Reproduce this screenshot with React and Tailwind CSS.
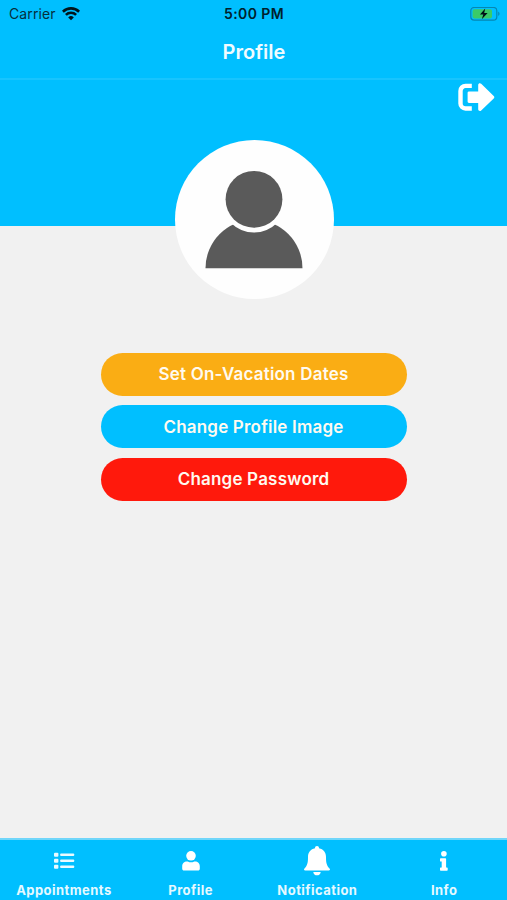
import React from "react";

function StatusBar() {
  return (
    <div className="grid h-7 grid-cols-3 items-center pl-[9px] pr-[7px] text-[14px] leading-7 text-[#06303d]">
      <div className="flex items-center gap-[6px]">
        <span className="tracking-[0.1px]">Carrier</span>
        <svg className="h-[14px] w-[18px]" viewBox="0 0 18 14" fill="none" stroke="#00151c" strokeWidth="2.6">
          <path d="M0.9 4.7a11.6 11.6 0 0 1 16.2 0" />
          <path d="M3.9 7.9a7.3 7.3 0 0 1 10.2 0" />
          <path d="M9 13.2L6.2 10.4a4 4 0 0 1 5.6 0z" fill="#00151c" stroke="none" />
        </svg>
      </div>
      <div className="pr-px text-center font-semibold tracking-[0.4px] text-[#00212c]">5:00 PM</div>
      <svg className="h-[15px] w-[30px] justify-self-end" viewBox="0 0 30 15">
        <rect x="0.8" y="0.4" width="26" height="12.8" rx="3.4" fill="none" stroke="#0587b2" strokeWidth="1.2" />
        <rect x="2.6" y="2.2" width="19.4" height="9.2" rx="1.8" fill="#3bcb68" />
        <path d="M28.2 4.6v4.4c1.8-.7 1.8-3.7 0-4.4z" fill="#0587b2" />
        <path d="M15.2 1.6L10 7.6h3.3l-1.5 4.7L17.6 6.1h-3.4z" fill="#001016" />
      </svg>
    </div>
  );
}

function Avatar() {
  return (
    <div className="h-[159px] w-[159px] rounded-full bg-[#fefefe]">
      <svg className="h-full w-full" viewBox="0 0 159 159">
        <path d="M30.5 128.2a48.5 48.5 0 0 1 97 0z" fill="#5a5a5a" />
        <circle cx="79" cy="59.5" r="33" fill="#fefefe" />
        <circle cx="79" cy="59.3" r="28.4" fill="#5a5a5a" />
      </svg>
    </div>
  );
}

function LogoutIcon() {
  return (
    <svg className="h-7 w-[37px]" viewBox="0 0 37 28" fill="#fff">
      <path d="M13.8 2.9H7.5a5 5 0 0 0-5 5v12.6a5 5 0 0 0 5 5h6.3" fill="none" stroke="#fff" strokeWidth="4.4" />
      <path d="M9.6 9.8c0-.8.6-1.4 1.4-1.4h9.2V2c0-1.7 1.9-2.3 3-1.200l12.500 12.100c.8.8.8 1.700 0 2.500L23.200 27.400c-1.100 1.100-3 .4-3-1.200v-6.300H11c-.8 0-1.400-.6-1.400-1.400z" />
    </svg>
  );
}

function ListIcon() {
  return (
    <svg className="h-[18px] w-[22px]" viewBox="0 0 22 18" fill="#e9faff">
      <rect x="1" y="0.7" width="4.4" height="4" rx="1" />
      <rect x="1" y="6.7" width="4.4" height="4" rx="1" />
      <rect x="1" y="12.7" width="4.4" height="4" rx="1" />
      <rect x="7.2" y="1.5" width="14" height="2.5" rx="0.8" />
      <rect x="7.2" y="7.5" width="14" height="2.5" rx="0.8" />
      <rect x="7.2" y="13.5" width="14" height="2.5" rx="0.8" />
    </svg>
  );
}

function PersonIcon() {
  return (
    <svg className="h-5 w-[18px]" viewBox="0 0 18 20" fill="#fff">
      <circle cx="9" cy="4.8" r="4.8" />
      <path d="M4.9 10.5h.9a6.9 6.9 0 0 0 6.4 0h.9c2.6 0 4.7 2.1 4.7 4.7v2.6c0 1-.8 1.8-1.8 1.8H2c-1 0-1.8-.8-1.8-1.8v-2.6c0-2.6 2.1-4.7 4.7-4.7z" />
    </svg>
  );
}

function BellIcon() {
  return (
    <svg className="h-[30px] w-[26px]" viewBox="0 0 26 30" fill="#fff">
      <path d="M13 0c-1.3 0-2 .9-2 2.3-4.4.9-7 4.3-7 8.7 0 6.5-.9 8.700-3.500 11.400-1 1-.4 2.100.7 2.100h23.600c1.100 0 1.700-1.100.7-2.100C22.900 19.700 22 17.500 22 11c0-4.400-2.600-7.800-7-8.700C15 .9 14.300 0 13 0z" />
      <path d="M9.300 25.900h7.400c-.2 2.100-1.700 3.400-3.700 3.400s-3.500-1.300-3.700-3.400z" />
    </svg>
  );
}

function InfoIcon() {
  return (
    <svg className="h-5 w-2" viewBox="0 0 8 20" fill="#fff">
      <circle cx="3.9" cy="2.8" r="2.8" />
      <path d="M.7 7.2h4.700c.4 0 .7.300.7.700v8.500h.9c.4 0 .7.300.7.700v2c0 .4-.3.700-.7.700H.7c-.4 0-.7-.3-.7-.7v-2c0-.4.3-.7.7-.7h1v-5.800h-1c-.4 0-.7-.3-.7-.7v-2c0-.4.3-.7.7-.7z" />
    </svg>
  );
}

const actions = [
  { label: "Set On-Vacation Dates", color: "bg-[#faad14]" },
  { label: "Change Profile Image", color: "bg-[#00bfff]" },
  { label: "Change Password", color: "bg-[#ff190c]" },
];

const tabs = [
  { label: "Appointments", Icon: ListIcon },
  { label: "Profile", Icon: PersonIcon },
  { label: "Notification", Icon: BellIcon },
  { label: "Info", Icon: InfoIcon },
];

export default function App() {
  return (
    <div className="flex h-[900px] w-[507px] flex-col overflow-hidden bg-[#f1f1f1] font-['Inter','Liberation_Sans',sans-serif]">
      <header className="h-20 shrink-0 border-b-2 border-[#18c4fe] bg-[#00bfff]">
        <StatusBar />
        <h1 className="pt-[9px] pl-px text-center text-[20px] leading-[30px] font-semibold text-[#f0fbff]">Profile</h1>
      </header>
      <main className="flex flex-1 flex-col items-center">
        <div className="flex h-[146px] w-full shrink-0 items-start justify-end bg-[#00bfff] pt-[3px] pr-[12px]">
          <button aria-label="Log out">
            <LogoutIcon />
          </button>
        </div>
        <div className="-mt-[86px] pl-px">
          <Avatar />
        </div>
        <div className="mt-[53.5px] flex w-[306px] flex-col gap-[9.6px]">
          {actions.map(({ label, color }) => (
            <button
              key={label}
              className={`h-[43px] rounded-full pt-[2px] text-[17px] font-semibold tracking-[0.2px] text-[#fffaf0] ${color}`}
            >
              {label}
            </button>
          ))}
        </div>
      </main>
      <nav className="grid h-[62px] shrink-0 grid-cols-4 border-t-2 border-[#70d6fa] bg-[#00bfff]">
        {tabs.map(({ label, Icon }) => (
          <button key={label} className="flex flex-col items-center pl-px">
            <span className="flex h-[41px] items-center justify-center">
              <Icon />
            </span>
            <span className="text-[13px] leading-[18px] font-bold tracking-[0.45px] text-[#e6f9ff]">{label}</span>
          </button>
        ))}
      </nav>
    </div>
  );
}
